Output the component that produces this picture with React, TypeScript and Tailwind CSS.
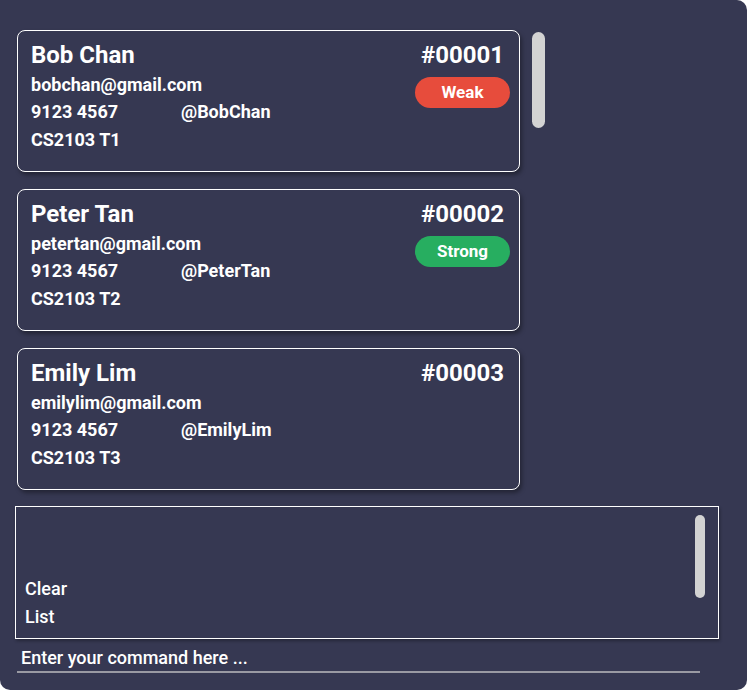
const persons = [
  { name: 'Bob Chan', id: '#00001', email: 'bobchan@gmail.com', phone: '9123 4567', tele: '@BobChan', group: 'CS2103 T1', tag: 'Weak' },
  { name: 'Peter Tan', id: '#00002', email: 'petertan@gmail.com', phone: '9123 4567', tele: '@PeterTan', group: 'CS2103 T2', tag: 'Strong' },
  { name: 'Emily Lim', id: '#00003', email: 'emilylim@gmail.com', phone: '9123 4567', tele: '@EmilyLim', group: 'CS2103 T3', tag: '' },
]

function PersonCard({ p }: { p: (typeof persons)[number] }) {
  return (
    <div className="h-[142px] w-[503px] rounded-[8px] border border-white pl-[13px] pr-[9px] pt-[10px] shadow-[2px_3px_4px_rgba(0,0,0,0.35)]">
      <div className="flex items-start justify-between">
        <div className="flex flex-col">
          <div className="text-[24px] font-bold leading-[28px]">{p.name}</div>
          <div className="mt-[3px] text-[18px] font-bold leading-[26px]">{p.email}</div>
          <div className="flex text-[18px] font-bold leading-[28px]">
            <span className="w-[150px]">{p.phone}</span>
            <span>{p.tele}</span>
          </div>
          <div className="text-[18px] font-bold leading-[28px]">{p.group}</div>
        </div>
        <div className="flex flex-col items-end">
          <div className="pr-[6px] text-[24px] font-bold leading-[28px]">{p.id}</div>
          {p.tag === 'Weak' && (
            <div className="mt-[8px] flex h-[31px] w-[95px] items-center justify-center rounded-full bg-[#e74c3c] text-[17px] font-bold">
              Weak
            </div>
          )}
          {p.tag === 'Strong' && (
            <div className="mt-[8px] flex h-[31px] w-[95px] items-center justify-center rounded-full bg-[#27ae60] text-[17px] font-bold">
              Strong
            </div>
          )}
        </div>
      </div>
    </div>
  )
}

export default function App() {
  return (
    <div className="h-[690px] w-[747px] bg-white">
      <div
        className="h-[690px] w-[747px] rounded-[10px] rounded-tl-none bg-[#363852] text-white"
        style={{ fontFamily: 'Roboto, "Liberation Sans", sans-serif' }}
      >
        {/* person list */}
        <div className="flex h-[500px] pl-[17px] pt-[30px]">
          <div className="flex flex-col gap-[17px]">
            {persons.map((p) => (
              <PersonCard key={p.id} p={p} />
            ))}
          </div>
          <div className="ml-[12px] mt-[2px] h-[96px] w-[13px] rounded-full bg-[#d3d3d3]" />
        </div>

        {/* result display */}
        <div className="ml-[15px] mt-[6px] flex h-[133px] w-[704px] border border-white shadow-[1px_2px_3px_rgba(0,0,0,0.3)]">
          <div className="flex flex-1 flex-col justify-end pb-[7px] pl-[9px] text-[18px] font-medium leading-[28px]">
            <div>Clear</div>
            <div>List</div>
          </div>
          <div className="mr-[13px] mt-[8px] h-[83px] w-[10px] rounded-full bg-[#d3d3d3]" />
        </div>

        {/* command box */}
        <div className="ml-[17px] mt-[7px] w-[683px] border-b-2 border-[#9a9aa3] pb-[1px] pl-[4px] text-[18px] font-medium leading-[24px]">
          Enter your command here ...
        </div>
      </div>
    </div>
  )
}
